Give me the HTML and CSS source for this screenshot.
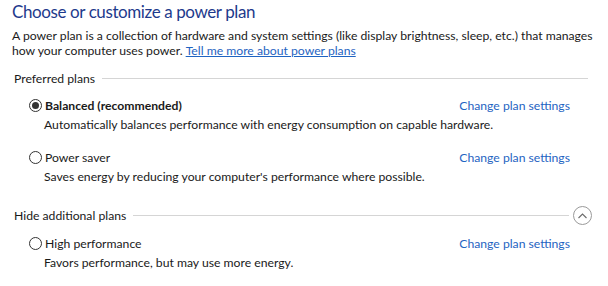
FILE: index.html
```html
<!DOCTYPE html>
<html lang="en">
<head>
    <meta charset="UTF-8">
    <title>Power Options</title>
    <link rel="stylesheet" href="styles.css">
</head>
<body>
    <div class="page">
        <h1 class="title">Choose or customize a power plan</h1>
        <p class="intro">A power plan is a collection of hardware and system settings (like display brightness, sleep, etc.) that manages how your computer uses power. <a href="#">Tell me more about power plans</a></p>

        <div class="group-header">
            <span>Preferred plans</span>
        </div>

        <div class="plan">
            <div class="plan-row">
                <label class="plan-name bold"><span class="radio checked"></span>Balanced (recommended)</label>
                <a href="#" class="plan-link">Change plan settings</a>
            </div>
            <div class="plan-desc">Automatically balances performance with energy consumption on capable hardware.</div>
        </div>

        <div class="plan">
            <div class="plan-row">
                <label class="plan-name"><span class="radio"></span>Power saver</label>
                <a href="#" class="plan-link">Change plan settings</a>
            </div>
            <div class="plan-desc">Saves energy by reducing your computer's performance where possible.</div>
        </div>

        <div class="group-header second">
            <span>Hide additional plans</span>
            <button class="collapse-btn" title="Hide additional plans">
                <svg width="9" height="6" viewBox="0 0 9 6"><path d="M0.5 5 L4.5 1 L8.5 5" fill="none" stroke="#6b6b6b" stroke-width="1.1"/></svg>
            </button>
        </div>

        <div class="plan">
            <div class="plan-row">
                <label class="plan-name"><span class="radio"></span>High performance</label>
                <a href="#" class="plan-link">Change plan settings</a>
            </div>
            <div class="plan-desc">Favors performance, but may use more energy.</div>
        </div>
    </div>
</body>
</html>
```

FILE: styles.css
```css
:root {
    --titleColor: #1e3a8c;
    --linkColor: #1f64c2;
    --lineColor: #d5d5d5;
    --mainFont: Lato, "Noto Sans", sans-serif;
}
body {
    margin: 0;
    background: white;
    color: #1a1a1a;
    font-family: var(--mainFont);
    font-size: 12.2px;
}
.page {
    padding: 0 10px 0 12px;
}
.title {
    margin: 0;
    font-size: 17px;
    font-weight: 400;
    letter-spacing: -0.4px;
    line-height: 24px;
    color: var(--titleColor);
}
.intro {
    margin: 4px 0 0;
    line-height: 15px;
}
.intro a {
    display: inline-block;
    color: var(--linkColor);
}
.group-header {
    display: flex;
    align-items: center;
    margin: 13px 10px 0 2px;
    line-height: 15px;
}
.group-header::after {
    content: "";
    flex: 1;
    border-top: 1px solid var(--lineColor);
    margin-left: 7px;
}
.group-header.second {
    margin-top: 22px;
    margin-right: 6px;
}
.group-header.second::after {
    order: 1;
}
.collapse-btn {
    order: 2;
    width: 19px;
    height: 19px;
    margin-left: 4px;
    padding: 0;
    border: 1px solid #9a9a9a;
    border-radius: 50%;
    background: white;
    display: flex;
    align-items: center;
    justify-content: center;
}
.plan {
    padding: 0 28px 0 17px;
    margin-top: 12px;
}
.plan + .plan {
    margin-top: 18px;
}
.group-header.second + .plan {
    margin-top: 11px;
}
.plan-row {
    display: flex;
    justify-content: space-between;
    align-items: center;
    line-height: 15px;
}
.plan-name {
    display: flex;
    align-items: center;
}
.plan-name.bold {
    font-weight: 700;
}
.radio {
    width: 11px;
    height: 11px;
    border: 1px solid #333;
    border-radius: 50%;
    margin-right: 3px;
    display: flex;
    align-items: center;
    justify-content: center;
}
.radio.checked::before {
    content: "";
    width: 7px;
    height: 7px;
    border-radius: 50%;
    background: #333;
}
.plan-link {
    color: var(--linkColor);
    text-decoration: none;
}
.plan-desc {
    margin: 4px 0 0 15px;
    line-height: 15px;
}
```
